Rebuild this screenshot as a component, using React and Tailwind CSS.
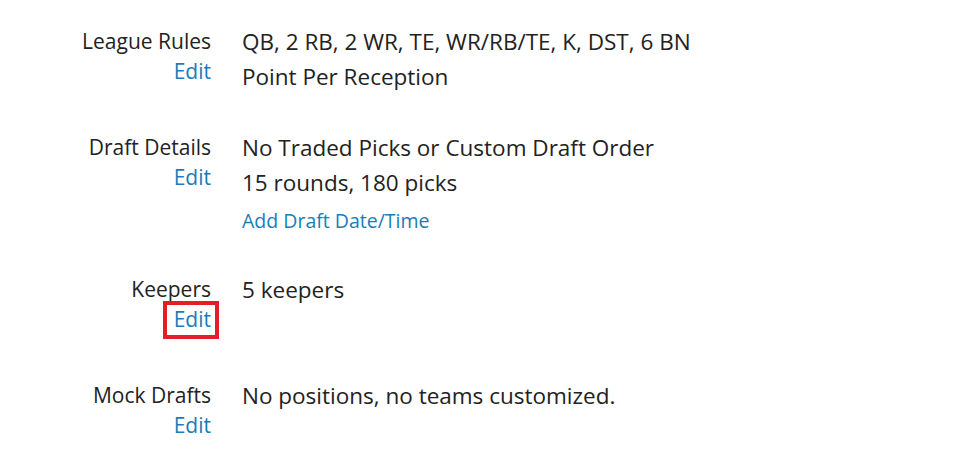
export default function App() {
  const font = { fontFamily: '"Open Sans", "Noto Sans", sans-serif' };
  const Label = ({ title, boxed }) => (
    <div className="w-[211px] shrink-0 text-right text-[21px] leading-[30px] pt-[2px] text-[#222]">
      <div>{title}</div>
      <div className="relative inline-block">
        <a className="text-[#1a7db8]">Edit</a>
        {boxed && (
          <span className="absolute left-[-11px] right-[-8px] top-[-3px] bottom-[-5px] border-4 border-[#e41e26]"></span>
        )}
      </div>
    </div>
  );
  return (
    <div className="w-[954px] h-[456px] bg-white overflow-hidden pt-[24px]" style={font}>
      <div className="flex gap-[31px] mb-[36px]">
        <Label title="League Rules" />
        <div className="text-[22.5px] leading-[35px] text-[#222]">
          <div>QB, 2 RB, 2 WR, TE, WR/RB/TE, K, DST, 6 BN</div>
          <div>Point Per Reception</div>
        </div>
      </div>
      <div className="flex gap-[31px] mb-[36px]">
        <Label title="Draft Details" />
        <div className="text-[22.5px] leading-[35px] text-[#222]">
          <div>No Traded Picks or Custom Draft Order</div>
          <div>15 rounds, 180 picks</div>
          <div className="mt-[6px] text-[19.5px] leading-[30px] text-[#1a7db8]">Add Draft Date/Time</div>
        </div>
      </div>
      <div className="flex gap-[31px] mb-[44px]">
        <Label title="Keepers" boxed />
        <div className="text-[22.5px] leading-[35px] text-[#222]">
          <div>5 keepers</div>
        </div>
      </div>
      <div className="flex gap-[31px]">
        <Label title="Mock Drafts" />
        <div className="text-[22.5px] leading-[35px] text-[#222]">
          <div>No positions, no teams customized.</div>
        </div>
      </div>
    </div>
  );
}
